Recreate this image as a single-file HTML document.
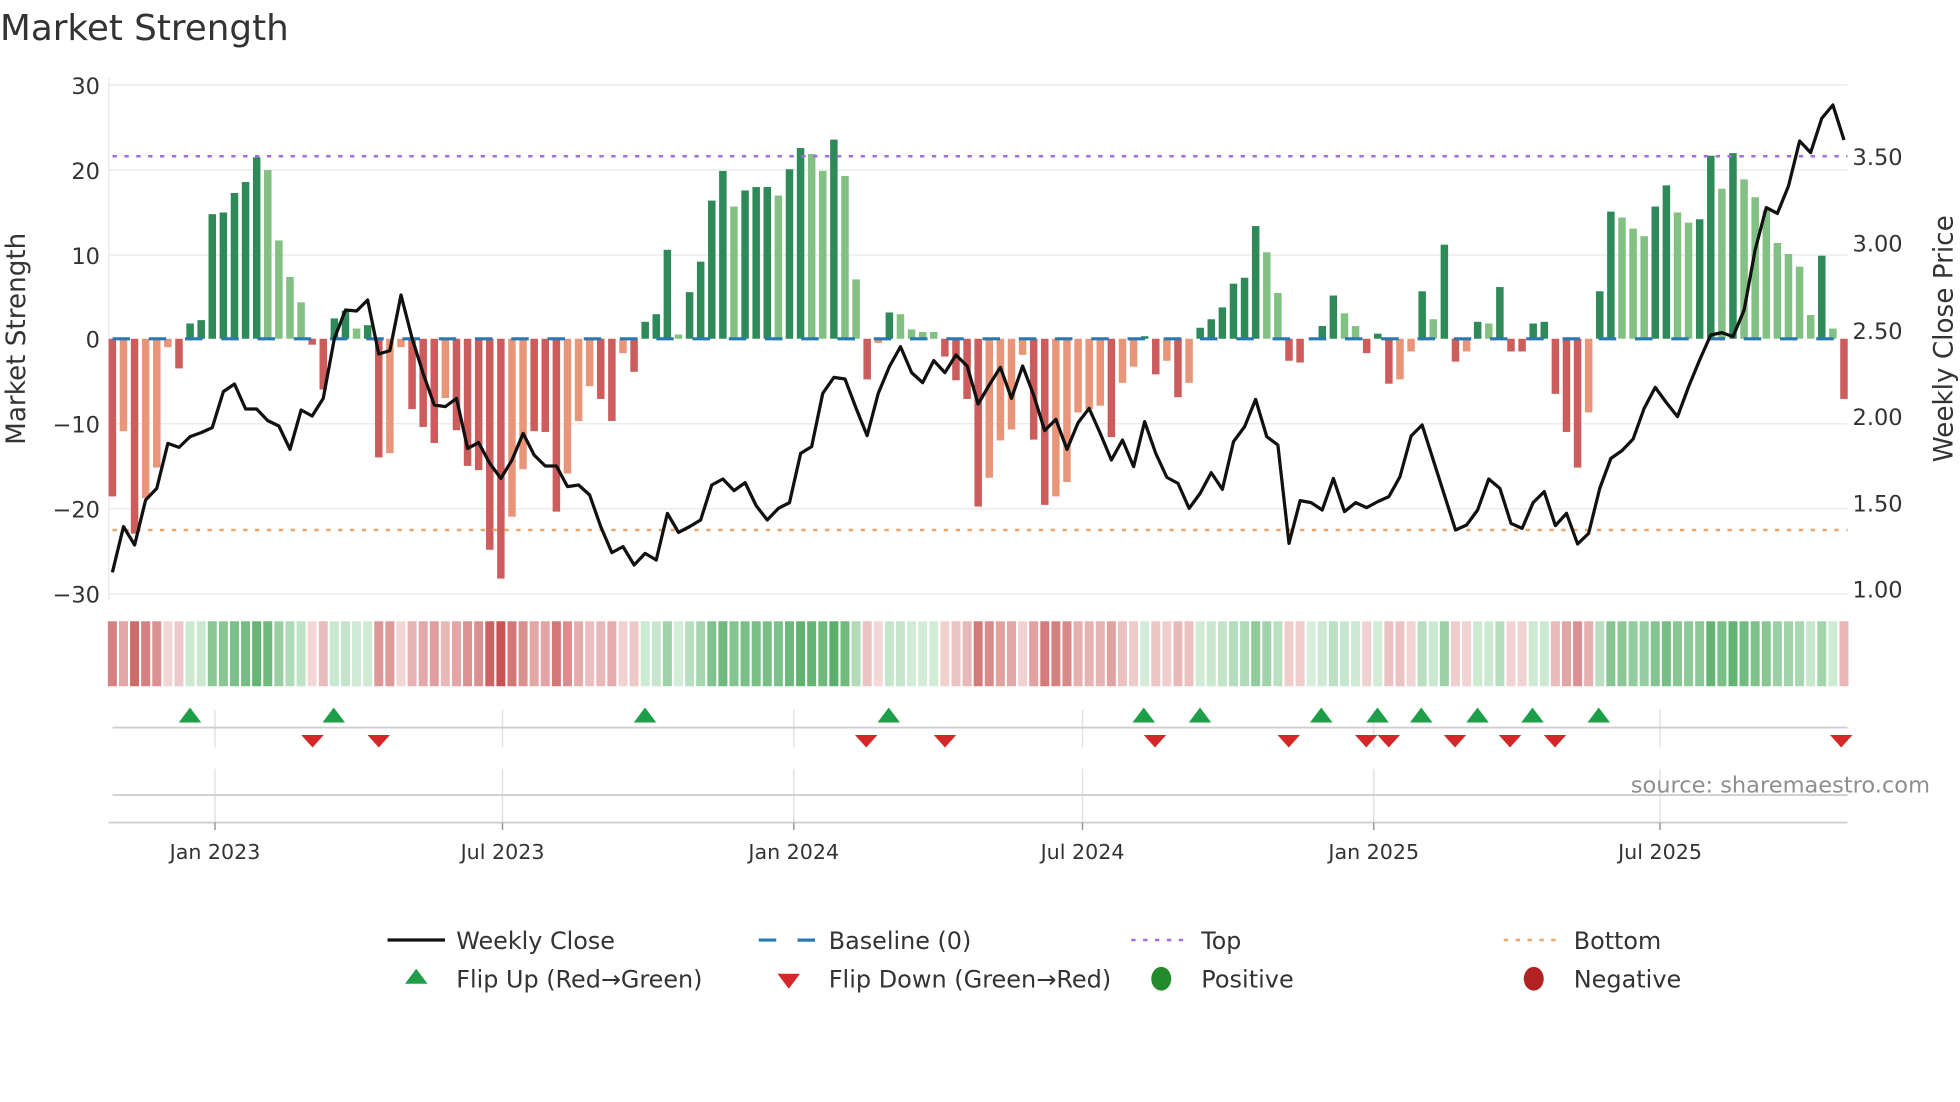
<!DOCTYPE html>
<html><head><meta charset="utf-8">
<style>
html,body{margin:0;padding:0;background:#fff;}
svg{display:block;}
text{font-family:"DejaVu Sans","Liberation Sans",sans-serif;}
</style></head>
<body>
<svg id="s" xmlns="http://www.w3.org/2000/svg" width="1960" height="1102" viewBox="0 0 1568 881.6">
<rect width="1568" height="882" fill="#fff"/>
<text x="0" y="32" font-size="28.5" fill="#333" textLength="231" lengthAdjust="spacingAndGlyphs">Market Strength</text>
<g id="grid" stroke="#ececec" stroke-width="1.2">
<line x1="87" y1="68" x2="1478" y2="68"/><line x1="87" y1="136" x2="1478" y2="136"/>
<line x1="87" y1="204" x2="1478" y2="204"/><line x1="87" y1="339" x2="1478" y2="339"/>
<line x1="87" y1="407" x2="1478" y2="407"/><line x1="87" y1="475" x2="1478" y2="475"/>
<line x1="87" y1="62" x2="87" y2="480"/>
</g>
<g font-size="18" fill="#333" text-anchor="end">
<text x="80" y="75">30</text><text x="80" y="143">20</text><text x="80" y="211">10</text>
<text x="80" y="278">0</text><text x="80" y="346">−10</text><text x="80" y="414">−20</text><text x="80" y="482">−30</text>
</g>
<g font-size="18" fill="#333">
<text x="1482" y="132">3.50</text><text x="1482" y="201">3.00</text><text x="1482" y="271">2.50</text>
<text x="1482" y="340">2.00</text><text x="1482" y="409">1.50</text><text x="1482" y="478">1.00</text>
</g>
<text transform="translate(20,271) rotate(-90)" font-size="21" fill="#333" text-anchor="middle">Market Strength</text>
<text transform="translate(1562,271) rotate(-90)" font-size="21" fill="#333" text-anchor="middle">Weekly Close Price</text>
<g id="bars"></g>
<line x1="90" y1="125" x2="1478" y2="125" stroke="#a66be0" stroke-width="2" stroke-dasharray="3.5 6"/>
<line x1="90" y1="424" x2="1478" y2="424" stroke="#f0a468" stroke-width="2" stroke-dasharray="3.5 6"/>
<line x1="90" y1="271" x2="1478" y2="271" stroke="#2a78b0" stroke-width="2.5" stroke-dasharray="14 15"/>
<polyline id="price" fill="none" stroke="#111" stroke-width="2.6" stroke-linejoin="round"/>
<g id="heat"></g>
<g stroke="#e2e2e6" stroke-width="1.2">
<line x1="172" y1="568" x2="172" y2="598"/><line x1="402" y1="568" x2="402" y2="598"/><line x1="635" y1="568" x2="635" y2="598"/>
<line x1="866" y1="568" x2="866" y2="598"/><line x1="1099" y1="568" x2="1099" y2="598"/><line x1="1328" y1="568" x2="1328" y2="598"/>
<line x1="172" y1="615" x2="172" y2="658"/><line x1="402" y1="615" x2="402" y2="658"/><line x1="635" y1="615" x2="635" y2="658"/>
<line x1="866" y1="615" x2="866" y2="658"/><line x1="1099" y1="615" x2="1099" y2="658"/><line x1="1328" y1="615" x2="1328" y2="658"/>
</g>
<line x1="90" y1="582" x2="1478" y2="582" stroke="#cfcfcf" stroke-width="1.5"/>
<line x1="90" y1="636" x2="1478" y2="636" stroke="#cfcfcf" stroke-width="1.5"/>
<line x1="87" y1="658" x2="1478" y2="658" stroke="#cfcfcf" stroke-width="1.5"/>
<g id="marks"></g>
<text x="1544" y="634" font-size="18" fill="#8f8f8f" text-anchor="end">source: sharemaestro.com</text>
<g stroke="#999" stroke-width="1.2">
<line x1="172" y1="658" x2="172" y2="664"/><line x1="402" y1="658" x2="402" y2="664"/><line x1="635" y1="658" x2="635" y2="664"/>
<line x1="866" y1="658" x2="866" y2="664"/><line x1="1099" y1="658" x2="1099" y2="664"/><line x1="1328" y1="658" x2="1328" y2="664"/>
</g>
<g font-size="16.5" fill="#333" text-anchor="middle">
<text x="172" y="687">Jan 2023</text><text x="402" y="687">Jul 2023</text><text x="635" y="687">Jan 2024</text>
<text x="866" y="687">Jul 2024</text><text x="1099" y="687">Jan 2025</text><text x="1328" y="687">Jul 2025</text>
</g>
<g font-size="19" fill="#333">
<line x1="310" y1="752" x2="356" y2="752" stroke="#111" stroke-width="2.6"/>
<text x="365" y="759" textLength="127" lengthAdjust="spacingAndGlyphs">Weekly Close</text>
<line x1="607" y1="752" x2="652" y2="752" stroke="#2a78b0" stroke-width="2.5" stroke-dasharray="14 17"/>
<line x1="638" y1="752" x2="652" y2="752" stroke="#2a78b0" stroke-width="2.5"/>
<text x="663" y="759" textLength="114" lengthAdjust="spacingAndGlyphs">Baseline (0)</text>
<line x1="905" y1="752" x2="950" y2="752" stroke="#a66be0" stroke-width="2" stroke-dasharray="3.5 6"/>
<text x="961" y="759" textLength="32" lengthAdjust="spacingAndGlyphs">Top</text>
<line x1="1203" y1="752" x2="1248" y2="752" stroke="#f0a468" stroke-width="2" stroke-dasharray="3.5 6"/>
<text x="1259" y="759" textLength="70" lengthAdjust="spacingAndGlyphs">Bottom</text>
<polygon points="333,775 342,787 324,787" fill="#1e9e48"/>
<text x="365" y="790" textLength="197" lengthAdjust="spacingAndGlyphs">Flip Up (Red→Green)</text>
<polygon points="622,779 640,779 631,791" fill="#d62728"/>
<text x="663" y="790" textLength="226" lengthAdjust="spacingAndGlyphs">Flip Down (Green→Red)</text>
<ellipse cx="929" cy="783" rx="8" ry="9.5" fill="#238b2c"/>
<text x="961" y="790" textLength="74" lengthAdjust="spacingAndGlyphs">Positive</text>
<ellipse cx="1227" cy="783" rx="8" ry="9.5" fill="#b22222"/>
<text x="1259" y="790" textLength="86" lengthAdjust="spacingAndGlyphs">Negative</text>
</g>
</svg>
<script>
var B=[
[-18.6,'R'],[-10.9,'S'],[-23,'R'],[-18.8,'S'],[-15.2,'S'],[-1,'S'],[-3.5,'R'],[1.8,'D'],[2.2,'D'],[14.7,'D'],
[14.9,'D'],[17.2,'D'],[18.5,'D'],[21.4,'D'],[19.9,'L'],[11.6,'L'],[7.3,'L'],[4.3,'L'],[-0.7,'R'],[-6,'R'],
[2.4,'D'],[3.3,'D'],[1.2,'L'],[1.6,'D'],[-14,'R'],[-13.5,'S'],[-1,'S'],[-8.3,'R'],[-10.4,'R'],[-12.3,'R'],
[-7,'S'],[-10.8,'R'],[-15,'R'],[-15.5,'R'],[-24.9,'R'],[-28.3,'R'],[-21,'S'],[-15.4,'S'],[-10.9,'R'],[-11,'R'],
[-20.4,'R'],[-15.9,'S'],[-9.7,'S'],[-5.6,'S'],[-7.1,'R'],[-9.7,'R'],[-1.7,'S'],[-3.9,'R'],[2,'D'],[2.9,'D'],
[10.5,'D'],[0.5,'L'],[5.5,'D'],[9.1,'D'],[16.3,'D'],[19.8,'D'],[15.6,'L'],[17.5,'D'],[17.9,'D'],[17.9,'D'],
[16.9,'L'],[20,'D'],[22.5,'D'],[21.8,'L'],[19.8,'L'],[23.5,'D'],[19.2,'L'],[7,'L'],[-4.8,'R'],[-0.5,'S'],
[3.1,'D'],[2.9,'L'],[1.1,'L'],[0.8,'L'],[0.8,'L'],[-2.1,'R'],[-4.9,'R'],[-7.1,'R'],[-19.8,'R'],[-16.4,'S'],
[-12,'S'],[-10.7,'S'],[-1.9,'S'],[-11.9,'R'],[-19.6,'R'],[-18.6,'S'],[-16.9,'S'],[-8.7,'S'],[-8.3,'S'],[-7.9,'S'],
[-11.6,'R'],[-5.2,'S'],[-3.3,'S'],[0.3,'D'],[-4.2,'R'],[-2.6,'S'],[-6.9,'R'],[-5.2,'S'],[1.3,'D'],[2.3,'D'],
[3.7,'D'],[6.5,'D'],[7.2,'D'],[13.3,'D'],[10.2,'L'],[5.4,'L'],[-2.6,'R'],[-2.8,'R'],[0,'L'],[1.5,'D'],
[5.1,'D'],[3,'L'],[1.5,'L'],[-1.7,'R'],[0.6,'D'],[-5.3,'R'],[-4.8,'S'],[-1.5,'S'],[5.6,'D'],[2.3,'L'],
[11.1,'D'],[-2.7,'R'],[-1.5,'S'],[2,'D'],[1.8,'L'],[6.1,'D'],[-1.5,'R'],[-1.5,'R'],[1.8,'D'],[2,'D'],
[-6.5,'R'],[-11,'R'],[-15.2,'R'],[-8.7,'S'],[5.6,'D'],[15,'D'],[14.3,'L'],[13,'L'],[12.1,'L'],[15.6,'D'],
[18.1,'D'],[14.9,'L'],[13.7,'L'],[14.1,'D'],[21.6,'D'],[17.7,'L'],[21.9,'D'],[18.8,'L'],[16.7,'L'],[15.1,'L'],
[11.3,'L'],[10,'L'],[8.5,'L'],[2.8,'L'],[9.8,'D'],[1.2,'L'],[-7.1,'R']];
var P=[1477,1340,1395,1260,1225,1090,1102,1070,1058,1043,935,912,987,987,1022,1038,1108,990,1008,955,
775,690,693,660,822,812,645,775,880,975,980,955,1105,1088,1150,1195,1140,1060,1125,1158,
1158,1220,1215,1245,1340,1418,1400,1455,1420,1440,1300,1357,1340,1320,1215,1197,1232,1208,1277,1320,
1285,1268,1120,1100,940,892,897,985,1067,940,860,800,878,908,842,878,825,858,972,915,
862,955,858,945,1052,1018,1108,1028,985,1060,1140,1080,1160,1025,1120,1192,1210,1285,1240,1178,
1228,1085,1040,958,1070,1095,1390,1262,1268,1290,1195,1295,1268,1283,1265,1250,1190,1068,1035,1140,
1245,1350,1335,1290,1197,1225,1330,1345,1268,1235,1337,1300,1392,1360,1225,1135,1112,1077,985,922,
968,1010,920,840,765,758,770,690,510,383,400,318,183,218,115,75,180];
var C={D:'#2e8a58',L:'#82c084',R:'#cd5c5c',S:'#e8957a'};
var NS='http://www.w3.org/2000/svg';
function el(t,a,p){var e=document.createElementNS(NS,t);for(var k in a)e.setAttribute(k,a[k]);p.appendChild(e);return e;}
var bars=document.getElementById('bars'),heat=document.getElementById('heat');
var sp=8.88,x0=89.9;
function mix(a,b,t){return 'rgb('+a.map(function(v,i){return Math.round(v+(b[i]-v)*t)}).join(',')+')';}
B.forEach(function(b,i){
 var x=x0+i*sp,v=b[0],h=Math.abs(v)*6.78,y=v>=0?271-h:271;
 if(h>0.3)el('rect',{x:x-3,y:y,width:6,height:h,fill:C[b[1]]},bars);
 var col=v>=0?mix([214,238,219],[88,174,104],Math.min(v/24,1)):mix([244,218,218],[198,84,84],Math.min(-v/28,1));
 el('rect',{x:x-3.6,y:497,width:7.2,height:52,fill:col},heat);
});
document.getElementById('price').setAttribute('points',P.map(function(z,i){return (x0+i*sp).toFixed(1)+','+(64+z/3.75).toFixed(1)}).join(' '));
var m=document.getElementById('marks');
[152,267,516,711,915,960,1057,1102,1137,1182,1226,1279].forEach(function(x){el('polygon',{points:x+',566 '+(x+9)+',578 '+(x-9)+',578',fill:'#1e9e48'},m);});
[250,303,693,756,924,1031,1093,1111,1164,1208,1244,1473].forEach(function(x){el('polygon',{points:(x-9)+',588 '+(x+9)+',588 '+x+',598',fill:'#d62728'},m);});
</script>
</body></html>
